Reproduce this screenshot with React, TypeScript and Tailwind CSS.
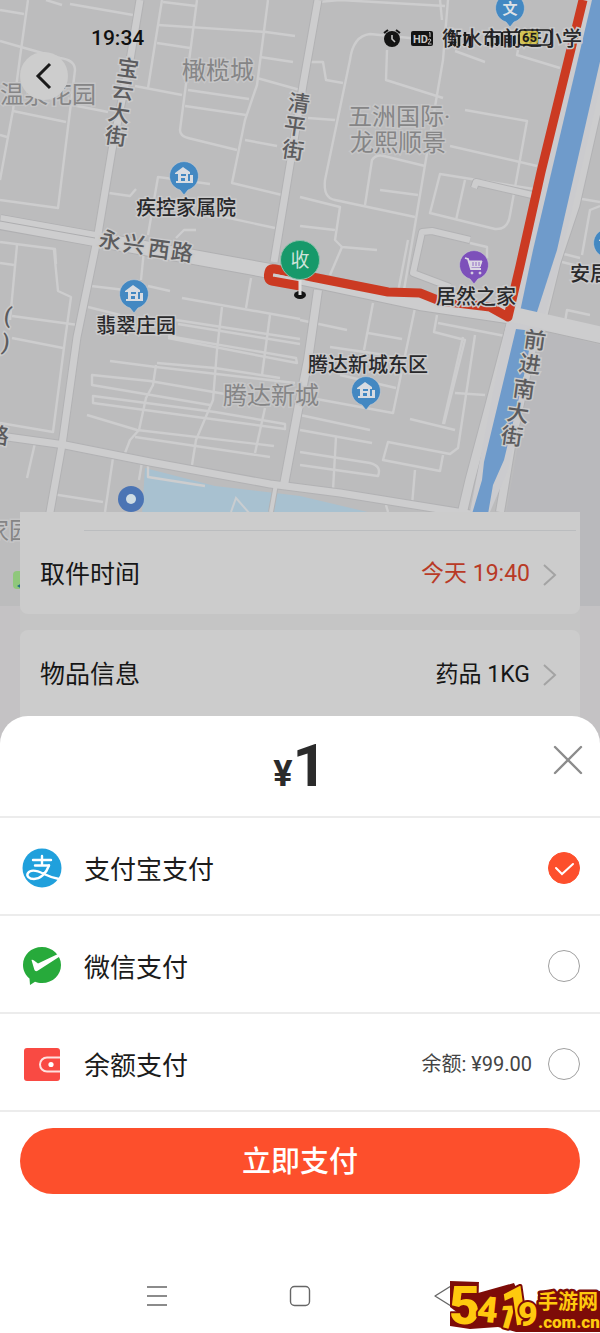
import React, {useState} from "react";

// quiet lanes between the main streets
const lanes = [
    "M0 10 L24 14", "M28 0 L21 50 L13 110 L0 180", "M46 0 L62 5", "M70 4 L133 15",
    "M0 41 L21 47 L60 58 Q75 60 75 70 L72 95 L58 208 L0 200", "M13 111 L66 122", "M72 105 L108 112", "M0 135 L7 137",
    "M135 86 L182 95", "M162 0 L158 25 L148 88", "M163 2 L196 6", "M158 25 L266 32 L295 36", "M157 43 L190 48",
    "M197 0 L180 130 Q180 136 188 138 L237 150", "M268 0 L257 85 L245 120 L232 183 L282 195", "M260 57 L293 62",
    "M257 78 L300 90", "M188 90 L249 99", "M185 106 L246 115", "M245 140 L277 146", "M109 193 L130 196 L136 189",
    "M148 235 L158 177 L210 184", "M215 215 L275 228", "M176 238 L184 230 L196 230", "M0 242 L55 249 L56 264",
    "M17 245 L10 320", "M0 263 L14 265", "M54 250 L58 291 L71 297 L65 340 L53 432 L0 423", "M12 316 L78 325",
    "M12 338 L63 348", "M91 286 L125 290", "M144 250 L141 280", "M148 286 L170 291", "M88 307 L120 315",
    "M35 443 L27 478", "M113 458 L105 512", "M52 494 L103 502", "M142 462 L139 480", "M148 463 L148 477 L205 486",
    "M182 298 L300 319", "M176 320 L300 339", "M178 324 L300 344", "M168 338 L297 363 L296 358 L168 336",
    "M222 307 L217 350 L213 400 L196 440 L192 465", "M251 278 L246 308", "M270 315 L262 375", "M110 361 L156 367 L295 383",
    "M157 363 L215 368 L280 378", "M156 365 L153 385 L146 398 L139 430 L130 440 L125 453", "M210 405 L92 385 L92 375 L150 381 L225 394",
    "M285 424 L215 412 L93 396 L93 403 L285 429 Z", "M87 415 L137 430 L274 446", "M135 437 L270 457", "M265 408 L255 453",
    "M318 2 L340 0 L445 6", "M448 0 L443 60 L425 165 L415 225 L404 290", "M440 0 L442 20", "M387 50 L386 80 L443 98",
    "M430 40 L370 34 Q353 36 350 60 L325 180 Q323 198 335 200 L415 217", "M308 62 L323 62 L326 80 L343 83",
    "M308 118 L335 120", "M455 51 L485 62", "M518 50 L517 55 L560 68",
    "M465 110 L527 121 L510 215 Q508 230 495 229 L430 213 L440 174 L540 190", "M450 146 L537 166",
    "M365 205 L372 160 Q376 154 384 156 L425 166", "M380 190 L418 195", "M465 180 L456 220",
    "M300 197 L340 207 L335 240 L342 247 L377 250", "M300 226 L335 230", "M342 247 L330 275",
    "M570 197 L600 202", "M582 255 L590 210 L600 206", "M564 254 L580 258", "M562 262 L578 266", "M408 240 L398 292",
    "M470 243 L487 247 L487 258", "M373 303 L364 350", "M368 333 L402 339", "M415 308 L393 413 L300 396",
    "M437 315 L434 332 L465 340 L444 424", "M410 419 L455 430", "M475 335 L458 448 L450 454 L388 442 L383 460 L440 471 L443 455",
    "M438 323 L505 336", "M463 337 L443 424", "M455 393 L485 395", "M415 470 L412 505", "M300 320 L347 330",
    "M330 347 L385 355", "M340 375 L396 388", "M300 415 L370 430", "M300 430 L372 443", "M336 437 L333 490",
    "M300 452 L370 463 Q382 466 378 476 L300 465", "M565 322 L567 310 L590 315", "M386 505 L388 512",
]

const streets = [
    {d: "M140 0 L130 60 L112 150 L97 240 L77 337 L62 445 L50 512 L36 606", w: 7},
    {d: "M318 0 L303 85 L290 165 L274 262", w: 7},
    {d: "M318 290 L308 360 L298 410 L284 485", w: 8},
    {d: "M0 436 L65 445 L150 462 L270 484 L340 493 L470 514", w: 7},
    {d: "M511 325 L490 405 L470 480 L462 514", w: 9},
    {d: "M536 330 L512 440 L500 512", w: 8},
    {d: "M610 50 L575 205 L556 262 L543 315", w: 9},
    {d: "M470 240 L432 231 L422 232 L413 273 L450 287", w: 6},
    {d: "M474 188 L476 182 L532 195", w: 6},
    {d: "M276 484 L271 512", w: 4},
]

type Pin = { x: number, y: number, color: string, kind: string }

const pins: Pin[] = [
    {x: 184, y: 176, color: "#4388c2", kind: "home"},
    {x: 134, y: 294, color: "#4388c2", kind: "home"},
    {x: 366, y: 391, color: "#4388c2", kind: "home"},
    {x: 510, y: 8, color: "#4388c2", kind: "school"},
    {x: 608, y: 243, color: "#4388c2", kind: "home"},
    {x: 474, y: 265, color: "#7d50ba", kind: "shop"},
]

const MapPin = ({x, y, color, kind}: Pin) => (
    <g transform={`translate(${x} ${y})`}>
        <path d="M0 19 L-4 14 A14.5 14.5 0 1 1 4 14 Z" fill={color} stroke="#c9cdd2" strokeWidth="0.6"/>
        {kind === "home" && (
            <path fillRule="evenodd" fill="#d8dce2" d="M-9 -3 L-1 -9 L6 -4 L6 -2 L4 -2 L4 5 L6 5 L6 -1 L9 -1 L9 7 L-8 7 L-8 5 L-6 5 L-6 -2 L-9 -2 Z M-3 -2 L-3 0 L2 0 L2 -2 Z M-3 2 L-3 5 L1 5 L1 2 Z"/>
        )}
        {kind === "shop" && (
            <g fill="none" stroke="#dcd8e4" strokeWidth="1.8">
                <path d="M-9 -7 L-6 -6 L-3 4 L7 4"/>
                <path d="M-5 -4 L8 -4 L6 2 L-3 2 Z" fill="#dcd8e4" strokeWidth="1"/>
                <path d="M-1 -3 V1 M2 -3 V1 M5 -3 V1" stroke={color} strokeWidth="0.8"/>
                <circle cx="-2" cy="8" r="1" fill="#dcd8e4" strokeWidth="1"/>
                <circle cx="6" cy="8" r="1" fill="#dcd8e4" strokeWidth="1"/>
            </g>
        )}
        {kind === "school" && <text x="0" y="6" textAnchor="middle" fontSize="15" fontWeight="700" fill="#dde1e6">文</text>}
    </g>
)

const places = [
    {x: 136, y: 215, text: "疾控家属院"},
    {x: 96, y: 333, text: "翡翠庄园"},
    {x: 436, y: 304, text: "居然之家"},
    {x: 308, y: 372, text: "腾达新城东区"},
    {x: 570, y: 281, text: "安居"},
    {x: 442, y: 46, text: "衡水市前进小学"},
]

const areas = [
    {x: 0, y: 103, text: "温泉花园"},
    {x: 182, y: 79, text: "橄榄城"},
    {x: 348, y: 125, text: "五洲国际·"},
    {x: 350, y: 151, text: "龙熙顺景"},
    {x: 223, y: 404, text: "腾达新城"},
    {x: -15, y: 539, text: "家园"},
]

// street names run along their street, one character at a time
const streetNames = [
    {text: "宝", x: 128, y: 68}, {text: "云", x: 123, y: 90}, {text: "大", x: 119, y: 113}, {text: "街", x: 116, y: 136},
    {text: "清", x: 299, y: 103}, {text: "平", x: 295, y: 126}, {text: "街", x: 293, y: 150},
    {text: "永", x: 110, y: 240}, {text: "兴", x: 134, y: 244}, {text: "西", x: 159, y: 249}, {text: "路", x: 182, y: 252},
    {text: "前", x: 535, y: 340}, {text: "进", x: 530, y: 364}, {text: "南", x: 524, y: 389}, {text: "大", x: 518, y: 413}, {text: "街", x: 512, y: 436},
    {text: "路", x: -2, y: 435}, {text: "(", x: 8, y: 315}, {text: ")", x: 6, y: 342},
]

const CityMap = () => (
    <svg
        className="absolute inset-x-0 top-0 h-[606px] w-full font-[Roboto,'Noto_Sans_CJK_SC',sans-serif]"
        viewBox="0 0 600 606"
        preserveAspectRatio="xMidYMin slice"
        aria-hidden="true"
    >
        <rect width="600" height="606" fill="#bcbcbd"/>
        <path d="M538 330 L600 345 L600 606 L490 606 Z" fill="#b9b9bc"/>
        <path d="M145 468 L215 486 L300 496 L376 514 L142 514 Z" fill="#a8c1d0"/>
        <path d="M231 512 L236 498 L250 514" fill="none" stroke="#c9cdd0" strokeWidth="2"/>
        <g fill="none" stroke="#cdcdce" strokeWidth="2.4" strokeLinejoin="round">
            {lanes.map((d) => <path key={d} d={d}/>)}
        </g>
        <g fill="none" strokeLinejoin="round">
            {streets.map((s) => <path key={s.d} d={s.d} stroke="#b2b2b4" strokeWidth={s.w + 2}/>)}
            <path d="M0 222 L95 239 L270 271 L420 303 L520 318 L610 338" stroke="#b0b0b2" strokeWidth="16"/>
            {streets.map((s) => <path key={s.d} d={s.d} stroke="#cdcdce" strokeWidth={s.w}/>)}
            <path d="M0 222 L95 239 L270 271 L420 303 L520 318 L610 338" stroke="#cdcdce" strokeWidth="14"/>
            <path d="M0 221 L95 238" stroke="#adadaf"/>
        </g>
        <path d="M583 0 L620 0 L560 262 L538 340 L508 470 L490 512 L470 512 L505 330 L520 262 Z" fill="#cbcbce"/>
        <path d="M592 0 L614 0 L557 250 L537 312 L520 312 L533 250 Z" fill="#6f9bcb"/>
        <path d="M516 329 L533 331 L522 385 L504 460 L493 485 L488 514 L472 514 L482 480 L484 462 Z" fill="#6f9bcb"/>
        <path d="M440 304 L520 316 L600 334" fill="none" stroke="#cdcdce" strokeWidth="15"/>
        <path
            d="M300 286 L272 281 Q267 280 269 272 Q270 268 275 269 L312 277 L388 292 L420 293 L440 301 L490 307 L508 317 L520 266 L541 172 L583 0"
            fill="none" stroke="#cb3a22" strokeWidth="9" strokeLinejoin="round"
        />
        <path d="M275 275 L296 279" stroke="#cdcdce" strokeWidth="2"/>

        <g fontSize="24" fill="#858586" stroke="#c6c6c7" strokeWidth="3" paintOrder="stroke">
            {areas.map((a) => <text key={a.text} x={a.x} y={a.y}>{a.text}</text>)}
        </g>
        <g fontSize="22" fontWeight="500" fill="#5c5c5e" stroke="#cacacb" strokeWidth="3" paintOrder="stroke" textAnchor="middle">
            {streetNames.map((s, i) => (
                <text key={i} transform={`translate(${s.x} ${s.y}) rotate(8)`} y="8">{s.text}</text>
            ))}
        </g>
        {pins.map((p) => <MapPin key={`${p.x}-${p.y}`} {...p}/>)}
        <g fontSize="20" fontWeight="500" fill="#29292b" stroke="#cacacb" strokeWidth="3" paintOrder="stroke">
            {places.map((p) => <text key={p.text} x={p.x} y={p.y}>{p.text}</text>)}
        </g>

        <circle cx="131" cy="499" r="13" fill="#4b74b4"/>
        <circle cx="131" cy="499" r="5" fill="#cfdce4"/>
        <rect x="13" y="571" width="12" height="18" rx="4" fill="#8fc77b"/>
        <path d="M17 586 L22 583 L22 589 Z" fill="#246a86"/>

        <ellipse cx="300" cy="295" rx="6" ry="4" fill="#141414"/>
        <path d="M300 276 V295" stroke="#dedede" strokeWidth="3"/>
        <circle cx="300" cy="260" r="19.5" fill="#17996a" stroke="#8fc0ab" strokeWidth="1"/>
        <text x="300" y="267" textAnchor="middle" fontSize="19" fill="#cfe4da">收</text>
    </svg>
)

const StatusBar = () => (
    <div className="flex h-5 items-center justify-between pl-[91px] pr-12">
        <span className="font-[Roboto] text-[21px] font-medium leading-5 text-[#111]">19:34</span>
        <svg className="h-5 w-[170px] font-[Roboto]" viewBox="0 0 170 20" aria-hidden="true">
            <circle cx="10" cy="11" r="8" fill="#141414"/>
            <path d="M2 5 L6 2 M14 2 L18 5" stroke="#141414" strokeWidth="2"/>
            <path d="M10 7 V11 L13 14" fill="none" stroke="#c4c4c4" strokeWidth="1.6"/>
            <rect x="29" y="3" width="22" height="15" rx="2" fill="#141414"/>
            <text x="31" y="15" fontSize="11" fontWeight="700" fill="#c8c8c8">HD</text>
            <path d="M47 5 L48 4.500 V9 M46 12 Q48 10 49 12 L46 16 H49.500" fill="none" stroke="#c8c8c8"/>
            <g stroke="#1c1c1c" strokeWidth="2.4">
                <path d="M69 14 V18 M73 11 V18 M77 7 V18 M83 4 V18 M88 8 V18"/>
                <path d="M106 14 V18 M110 10 V18 M115 7 V18 M120 4 V18 M127 3 V18 M132 8 V18"/>
            </g>
            <path d="M70 3 L66 8 H72 M71 3 V10 M78 3 H75 V8 H79 M108 3 L104 8 H110 M109 3 V10" fill="none" stroke="#1c1c1c" strokeWidth="1.2"/>
            <rect x="138" y="3" width="18" height="13" rx="2" fill="#d8c43c" fillOpacity="0.8"/>
            <rect x="137" y="2" width="32" height="15" rx="3" fill="none" stroke="#1c1c1c" strokeWidth="1.6"/>
            <text x="140" y="14" fontSize="13" fontWeight="700" fill="#1c1c1c">65</text>
        </svg>
    </div>
)

const AlipayIcon = () => (
    <svg className="size-10" viewBox="0 0 40 40" aria-hidden="true">
        <circle cx="20" cy="20" r="19.5" fill="#20a0dc"/>
        <g fill="none" stroke="#fff" strokeWidth="2.4" strokeLinecap="round">
            <path d="M11 12 H29 M20 8 V17 M13 17.500 H27"/>
            <path d="M27 17.500 C24 26 18 31 12 31 C7 31 4 28 6 25 C9 21 16 23 22 26 C28 29 32 30 37 31"/>
        </g>
    </svg>
)

const WechatIcon = () => (
    <svg className="size-10" viewBox="0 0 40 40" aria-hidden="true">
        <path d="M20 1 C30 1 39 9 39 19 C39 29 31 37 20 37 C17.500 37 15 36.500 13 35.700 L8 39 L7.500 32.500 C3.500 29 1 24.500 1 19 C1 9 9 1 20 1 Z" fill="#27aa3b"/>
        <path d="M9.500 14 C10 13.500 11 13.700 12 14.500 L16 17.500 L37 7.500 L38.500 10 L16 24.500 C14.500 25.500 13 25.500 12.300 23.500 Z" fill="#fff"/>
    </svg>
)

const WalletIcon = () => (
    <svg className="size-10" viewBox="0 0 40 40" aria-hidden="true">
        <rect x="2" y="4" width="36" height="33" rx="3" fill="#f94a43"/>
        <path d="M38 13.500 H25 A7 7 0 0 0 25 27.500 H38" fill="none" stroke="#ffe1df" strokeWidth="2"/>
        <circle cx="29" cy="20.500" r="2.600" fill="#fff"/>
    </svg>
)

const Chevron = () => (
    <svg className="h-6 w-4" viewBox="0 0 16 24" fill="none" stroke="#a3a3a3" strokeWidth="2" aria-hidden="true">
        <path d="M2 2 L13 12 L2 22"/>
    </svg>
)

const methods = [
    {id: "alipay", name: "支付宝支付", icon: <AlipayIcon/>, note: ""},
    {id: "wechat", name: "微信支付", icon: <WechatIcon/>, note: ""},
    {id: "balance", name: "余额支付", icon: <WalletIcon/>, note: "余额: ¥99.00"},
]

const App = () => {
    const [method, setMethod] = useState<string>("alipay");

    return (
        <div className="relative flex min-h-screen flex-col overflow-hidden bg-[#c4c2c4] font-[Roboto,'Noto_Sans_CJK_SC',sans-serif]">
            <CityMap/>

            <header className="relative pt-7">
                <StatusBar/>
                <button type="button" aria-label="返回" className="ml-5 mt-1 flex size-12 items-center justify-center rounded-full bg-[#cdcdcd]">
                    <svg className="h-7 w-5" viewBox="0 0 20 28" fill="none" stroke="#1a1a1a" strokeWidth="3" aria-hidden="true">
                        <path d="M16 2 L4 14 L16 26"/>
                    </svg>
                </button>
            </header>

            <main className="relative mt-[412px] flex flex-1 flex-col">
                <div className="mx-5 flex flex-col gap-4 bg-[#c5c5c5] text-[25px] text-[#161616]">
                    <section className="rounded-b-lg bg-[#cccccc]">
                        <div className="ml-16 mr-1 h-[19px] border-b border-[#bbbdbf]"/>
                        <button type="button" className="flex h-[83px] w-full items-center pl-5 pr-[22px] pt-1">
                            <span>取件时间</span>
                            <span className="ml-auto mr-3 text-[23px] text-[#b93a26]">今天 19:40</span>
                            <Chevron/>
                        </button>
                    </section>
                    <section className="rounded-t-lg bg-[#cccccc] pb-8">
                        <button type="button" className="flex h-[86px] w-full items-center pl-5 pr-[22px] pt-1">
                            <span>物品信息</span>
                            <span className="ml-auto mr-3 text-[23px]">药品 1KG</span>
                            <Chevron/>
                        </button>
                    </section>
                </div>

                <form className="relative -mt-8 flex flex-1 flex-col rounded-t-[28px] bg-white" onSubmit={(e) => e.preventDefault()}>
                    <div className="relative flex h-[102px] items-center justify-center border-b-2 border-[#ececec]">
                        <h1 className="flex items-baseline font-bold text-[#2b2b2b]">
                            <span className="text-4xl">¥</span>
                            <span className="text-6xl">1</span>
                        </h1>
                        <button type="button" aria-label="关闭" className="absolute right-4 top-7 size-8">
                            <svg className="size-8" viewBox="0 0 32 32" stroke="#8c8c8c" strokeWidth="2.400" strokeLinecap="round" aria-hidden="true">
                                <path d="M3 3 L29 29 M29 3 L3 29"/>
                            </svg>
                        </button>
                    </div>

                    {methods.map((m) => (
                        <label key={m.id} className="flex h-[98px] items-center border-b-2 border-[#ececec] pl-[22px] pr-5 pt-1">
                            {m.icon}
                            <span className="ml-[22px] pt-1 text-[26px] text-[#1c1c1c]">{m.name}</span>
                            <span className="ml-auto mr-4 text-xl text-[#444]">{m.note}</span>
                            <span className="grid size-8">
                                <input
                                    type="radio"
                                    name="method"
                                    className="peer col-start-1 row-start-1 size-8 appearance-none rounded-full border border-[#a0a0a0] checked:border-[#fd4f2c] checked:bg-[#fd4f2c]"
                                    checked={method === m.id}
                                    onChange={() => setMethod(m.id)}
                                />
                                <svg className="pointer-events-none invisible col-start-1 row-start-1 size-8 peer-checked:visible" viewBox="0 0 32 32" fill="none" stroke="#fff" strokeWidth="2" strokeLinecap="round" aria-hidden="true">
                                    <path d="M8 16 L14 22 L25 12"/>
                                </svg>
                            </span>
                        </label>
                    ))}

                    <button type="submit" className="mx-5 mt-4 h-[66px] rounded-full bg-[#fd4f2c] pt-1 text-[29px] font-medium text-white">
                        立即支付
                    </button>

                    <nav className="mb-[21px] mt-auto grid grid-cols-3 px-[86px]">
                        <button type="button" aria-label="最近任务" className="flex h-8 items-center justify-center">
                            <svg className="size-6" viewBox="0 0 24 24" stroke="#666" strokeWidth="1.400" aria-hidden="true">
                                <path d="M2 3 H22 M2 12 H22 M2 21 H22"/>
                            </svg>
                        </button>
                        <button type="button" aria-label="主页" className="flex h-8 items-center justify-center">
                            <svg className="size-6" viewBox="0 0 24 24" fill="none" stroke="#666" strokeWidth="1.400" aria-hidden="true">
                                <rect x="2.500" y="2.500" width="19" height="19" rx="4"/>
                            </svg>
                        </button>
                        <button type="button" aria-label="后退" className="flex h-8 items-center justify-center">
                            <svg className="size-6" viewBox="0 0 24 24" fill="none" stroke="#666" strokeWidth="1.400" strokeLinejoin="round" aria-hidden="true">
                                <path d="M20 2 L4 12 L20 22 Z"/>
                            </svg>
                        </button>
                    </nav>
                </form>
            </main>

            {/* site badge over the corner */}
            <svg className="pointer-events-none absolute bottom-0 right-0 h-[54px] w-[150px] font-[Roboto,'Noto_Sans_CJK_SC',sans-serif]" viewBox="0 0 150 54">
                <path d="M0 2 L29 3 L28 14 L64 4 L72 22 L88 26 L88 14 L150 12 V53 H66 L48 48 L20 50 L0 47 V36 L8 34 L0 28 Z" fill="#7d0c08"/>
                <g fill="#ffc90e" stroke="#7d0c08" strokeWidth="4" strokeLinejoin="round" paintOrder="stroke" fontWeight="900">
                    <text x="-1" y="45" fontSize="54">5</text>
                    <text x="26" y="42" fontSize="36" transform="rotate(6 26 42)">4</text>
                    <text x="45" y="46" fontSize="34" transform="rotate(16 45 46)">1</text>
                    <text x="54" y="48" fontSize="54" transform="rotate(-8 54 48)">1</text>
                    <text x="68" y="47" fontSize="34">9</text>
                </g>
                <g fill="#ffc90e" stroke="#7d0c08" strokeWidth="5" strokeLinejoin="round" paintOrder="stroke" fontWeight="700">
                    <text x="88" y="30" fontSize="20">手游网</text>
                    <text x="88" y="49" fontSize="17" fontWeight="900">.com.cn</text>
                </g>
            </svg>
        </div>
    )
}

export default App
